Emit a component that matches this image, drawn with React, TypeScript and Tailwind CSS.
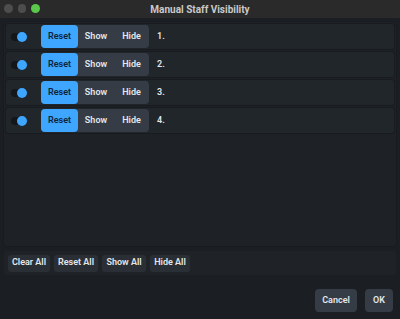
import React from 'react';

const rows = [1, 2, 3, 4];

function Toggle() {
  return (
    <div className="relative w-[16px] h-[8px] rounded-full bg-[#141618]">
      <div className="absolute right-0 top-[-1px] w-[10px] h-[10px] rounded-full bg-[#3ea6ff]" />
    </div>
  );
}

function StaffRow({ n }: { n: number }) {
  return (
    <div className="h-[27px] flex items-center rounded-[3px] bg-[#21262b] border border-[#181b1f]">
      <div className="w-[35px] flex pl-[5px]">
        <Toggle />
      </div>
      <div className="flex h-[23px] rounded-[4px] bg-[#353c45] text-[9px] font-semibold">
        <button className="w-[37px] rounded-[4px] bg-[#3ea6ff] text-[#10243a]">Reset</button>
        <button className="w-[36px] text-[#e4e7eb]">Show</button>
        <button className="w-[35px] text-[#e4e7eb]">Hide</button>
      </div>
      <span className="ml-[8px] text-[9px] font-semibold text-[#e4e7eb]">{n}.</span>
    </div>
  );
}

export default function App() {
  return (
    <div
      className="w-[400px] h-[319px] bg-[#1b1e22] flex flex-col"
      style={{ fontFamily: 'Roboto, "Noto Sans", sans-serif' }}
    >
      <div className="relative h-[18px] bg-[#2a2a2a] flex items-center justify-center">
        <div className="absolute left-[4px] top-[4px] flex gap-[5px]">
          <div className="w-[8.5px] h-[8.5px] rounded-full bg-[#4d4d4d]" />
          <div className="w-[8.5px] h-[8.5px] rounded-full bg-[#4d4d4d]" />
          <div className="w-[8.5px] h-[8.5px] rounded-full bg-[#5ac84a]" />
        </div>
        <span className="text-[10px] font-bold text-[#c9c9c9]">Manual Staff Visibility</span>
      </div>

      <div className="mx-[3px] mt-[3px] h-[226px] rounded-[4px] bg-[#1e2227] border border-[#181b1f] p-[1px] flex flex-col gap-[1px]">
        {rows.map((n) => (
          <StaffRow key={n} n={n} />
        ))}
      </div>

      <div className="mx-[4px] mt-[4px] h-[24px] rounded-[3px] bg-[#1f2328] flex items-center gap-[4px] px-[4px] text-[9px] font-semibold text-[#e4e7eb]">
        <button className="w-[42px] h-[17px] rounded-[3px] bg-[#2a2f35]">Clear All</button>
        <button className="w-[44px] h-[17px] rounded-[3px] bg-[#2a2f35]">Reset All</button>
        <button className="w-[44px] h-[17px] rounded-[3px] bg-[#2a2f35]">Show All</button>
        <button className="w-[40px] h-[17px] rounded-[3px] bg-[#2a2f35]">Hide All</button>
      </div>

      <div className="flex justify-end gap-[8px] pr-[7px] mt-[14px] text-[9px] font-semibold text-[#e4e7eb]">
        <button className="w-[42px] h-[23px] rounded-[4px] bg-[#353c45]">Cancel</button>
        <button className="w-[28px] h-[23px] rounded-[4px] bg-[#353c45]">OK</button>
      </div>
    </div>
  );
}
